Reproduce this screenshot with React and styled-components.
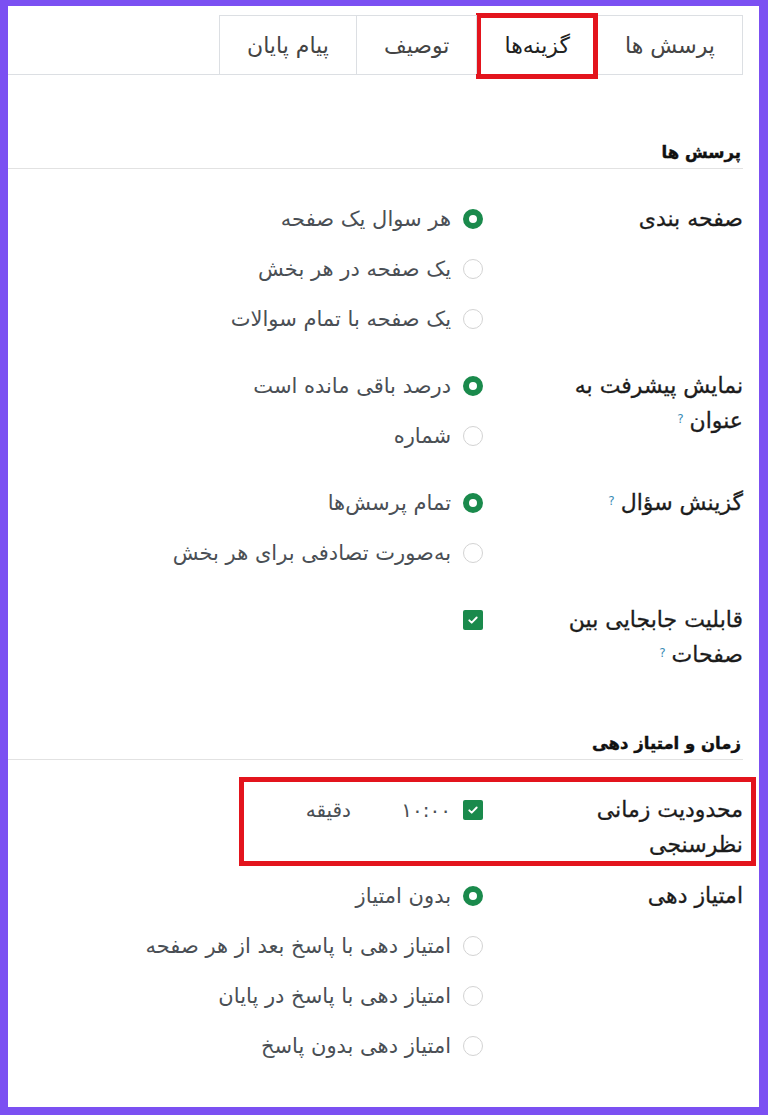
import React from 'react';
import styled, { createGlobalStyle } from 'styled-components';

const GlobalStyle = createGlobalStyle`
  html, body {
    margin: 0;
    padding: 0;
    background: #7b50f2;
  }
  body {
    font-family: "DejaVu Sans", sans-serif;
  }
  * {
    box-sizing: border-box;
  }
`;

const Frame = styled.div`
  direction: rtl;
  min-height: 100vh;
  background: #fff;
  border: solid #7b50f2;
  border-width: 6px 9px 8px 8px;
  padding: 9px 16px 0 0;
`;

const TabBar = styled.div`
  display: flex;
  border-bottom: 1px solid #dcdfe3;
`;

const Tab = styled.div`
  position: relative;
  display: flex;
  align-items: center;
  padding: 0 27px;
  border: 1px solid #dcdfe3;
  border-bottom: 0;
  font-size: 22px;
  color: ${p => (p.$active ? '#222' : '#444')};
  background: #fff;
  margin-bottom: ${p => (p.$active ? '-1px' : '0')};
  height: ${p => (p.$active ? '60px' : '59px')};

  & + & {
    margin-inline-start: -1px;
  }

  ${p => p.$active && `
    &::after {
      content: '';
      position: absolute;
      top: -3px;
      bottom: -4px;
      left: -1px;
      right: -1px;
      border: 5px solid #e3141d;
    }
  `}
`;

const Section = styled.section`
  padding-top: ${p => p.$top}px;
`;

const Heading = styled.h2`
  margin: 0 0 25px;
  padding: 0 2px 1px 0;
  font-size: 16.5px;
  font-weight: 700;
  line-height: 28px;
  color: #111;
  border-bottom: 1px solid #e2e2e2;
  -webkit-text-stroke: 0.4px #111;
`;

const Row = styled.div`
  position: relative;
  display: grid;
  grid-template-columns: 200px 1fr;
  column-gap: 60px;
  margin-bottom: ${p => (p.$highlight ? '9px' : '17px')};

  ${p => p.$highlight && `
    &::after {
      content: '';
      position: absolute;
      top: -8px;
      bottom: -4px;
      right: -13px;
      left: 231px;
      border: 5px solid #e3141d;
      pointer-events: none;
    }
  `}
`;

const Label = styled.div`
  padding-top: 7px;
  font-size: 22px;
  line-height: 35px;
  color: #1c1c1c;
  -webkit-text-stroke: 0.3px #1c1c1c;
`;

const Help = styled.span`
  position: relative;
  top: -5px;
  margin-right: 6px;
  font-size: 12px;
  line-height: 1;
  color: #3b8db5;
  -webkit-text-stroke: 0;
`;

const Options = styled.div`
  display: flex;
  flex-direction: column;
`;

const Option = styled.div`
  height: 50px;
  display: flex;
  align-items: center;
  gap: 12px;
  font-size: 21px;
  color: #4a4f55;
`;

const Radio = styled.span`
  flex: none;
  width: 20px;
  height: 20px;
  border-radius: 50%;
  background: #fff;
  border: ${p => (p.$checked ? '6px solid #1a8a4c' : '1px solid #d3d3d3')};
`;

const Check = styled.span`
  flex: none;
  width: 20px;
  height: 20px;
  border-radius: 2px;
  background: #1a8a4c;
  display: flex;
  align-items: center;
  justify-content: center;
`;

const TimeValue = styled.span`
  width: 88px;
  font-size: 20px;
  color: #4a4f55;
`;

const Unit = styled.span`
  font-size: 20px;
  color: #4a4f55;
`;

const CheckBox = () => (
  <Check>
    <svg width="12" height="12" viewBox="0 0 12 12">
      <path d="M2.3 6.3l2.4 2.4 5-5.2" fill="none" stroke="#fff" strokeWidth="1.9" strokeLinecap="round" strokeLinejoin="round" />
    </svg>
  </Check>
);

const RadioGroup = ({ items, selected = 0 }) => (
  <Options>
    {items.map((text, i) => (
      <Option key={text}>
        <Radio $checked={i === selected} />
        {text}
      </Option>
    ))}
  </Options>
);

const tabs = ['پرسش ها', 'گزینه‌ها', 'توصیف', 'پیام پایان'];

export default function App() {
  return (
    <>
      <GlobalStyle />
      <Frame>
        <TabBar>
          {tabs.map(t => (
            <Tab key={t} $active={t === 'گزینه‌ها'}>{t}</Tab>
          ))}
        </TabBar>

        <Section $top={64}>
          <Heading>پرسش ها</Heading>
          <Row>
            <Label>صفحه بندی</Label>
            <RadioGroup items={['هر سوال یک صفحه', 'یک صفحه در هر بخش', 'یک صفحه با تمام سوالات']} />
          </Row>
          <Row>
            <Label>نمایش پیشرفت به عنوان<Help>?</Help></Label>
            <RadioGroup items={['درصد باقی مانده است', 'شماره']} />
          </Row>
          <Row>
            <Label>گزینش سؤال<Help>?</Help></Label>
            <RadioGroup items={['تمام پرسش‌ها', 'به‌صورت تصادفی برای هر بخش']} />
          </Row>
          <Row>
            <Label>قابلیت جابجایی بین صفحات<Help>?</Help></Label>
            <Options>
              <Option><CheckBox /></Option>
            </Options>
          </Row>
        </Section>

        <Section $top={41}>
          <Heading>زمان و امتیاز دهی</Heading>
          <Row $highlight>
            <Label>محدودیت زمانی نظرسنجی</Label>
            <Options>
              <Option>
                <CheckBox />
                <TimeValue>۱۰:۰۰</TimeValue>
                <Unit>دقیقه</Unit>
              </Option>
            </Options>
          </Row>
          <Row>
            <Label>امتیاز دهی</Label>
            <RadioGroup
              items={[
                'بدون امتیاز',
                'امتیاز دهی با پاسخ بعد از هر صفحه',
                'امتیاز دهی با پاسخ در پایان',
                'امتیاز دهی بدون پاسخ',
              ]}
            />
          </Row>
        </Section>
      </Frame>
    </>
  );
}
